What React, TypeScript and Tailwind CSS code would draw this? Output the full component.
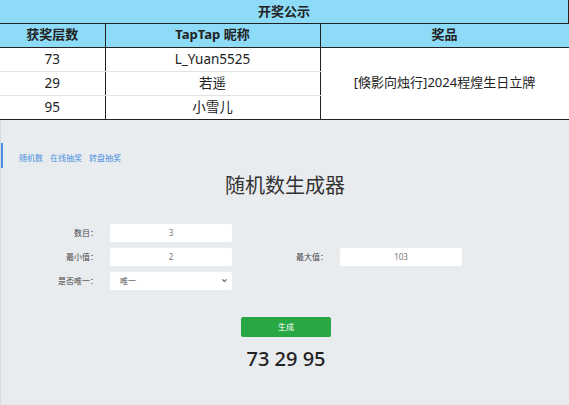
import React from "react";

const winners = [
  { floor: "73", name: "L_Yuan5525" },
  { floor: "29", name: "若遥" },
  { floor: "95", name: "小雪儿" },
];

const font = { fontFamily: '"Noto Sans", "Noto Sans CJK SC", sans-serif' };

function Field({ value }: { value: string }) {
  return (
    <div className="h-[18px] w-[122px] rounded-[2px] bg-white flex items-center justify-center text-[8px] text-[#777]">
      {value}
    </div>
  );
}

function Label({ text }: { text: string }) {
  return <div className="text-right text-[8px] text-[#4a4a4a] leading-[18px]">{text}</div>;
}

export default function App() {
  return (
    <div className="w-[569px] h-[405px] bg-white overflow-hidden" style={font}>
      <table className="w-[569px] border-collapse text-[13.5px] text-[#222] table-fixed">
        <colgroup>
          <col className="w-[105px]" />
          <col className="w-[215px]" />
          <col />
        </colgroup>
        <thead>
          <tr className="h-[23px] bg-[#8ddbf7]">
            <th colSpan={3} className="border-r border-b border-[#222] font-bold text-[13px] p-0">
              开奖公示
            </th>
          </tr>
          <tr className="h-[24px] bg-[#8ddbf7]">
            <th className="border-b border-r border-[#222] font-bold text-[13px] p-0">获奖层数</th>
            <th className="border-b border-r border-[#222] font-bold text-[13px] p-0">TapTap 昵称</th>
            <th className="border-b border-[#222] font-bold text-[13px] p-0">奖品</th>
          </tr>
        </thead>
        <tbody>
          {winners.map((w, i) => (
            <tr key={w.floor} className="h-[24px]">
              <td
                className={`text-center p-0 border-r border-[#222] ${
                  i < 2 ? "border-b border-b-[#e2e2e2]" : "border-b border-b-[#222]"
                }`}
              >
                {w.floor}
              </td>
              <td
                className={`text-center p-0 border-r border-[#222] ${
                  i < 2 ? "border-b border-b-[#e2e2e2]" : "border-b border-b-[#222]"
                }`}
              >
                {w.name}
              </td>
              {i === 0 && (
                <td rowSpan={3} className="text-center p-0 border-b border-[#222] text-[13px]">
                  [倏影向烛行]2024程煌生日立牌
                </td>
              )}
            </tr>
          ))}
        </tbody>
      </table>

      <div className="h-[286px] bg-[#e9ecef] border-l border-[#d6dadf] flex flex-col">
        <nav className="mt-[23px] h-[25px] border-l-2 border-[#4a8fe0] pl-[16px] pt-[9px] flex gap-[7px] text-[8px] leading-[11px] text-[#4a8fe0]">
          <span>随机数</span>
          <span>在线抽奖</span>
          <span>转盘抽奖</span>
        </nav>

        <h1 className="mt-[4px] h-[28px] text-center text-[20px] leading-[28px] text-[#333]">随机数生成器</h1>

        <div className="mt-[24px] grid grid-cols-[97px_122px_84px_122px] gap-x-[12px] gap-y-[6px]">
          <Label text="数目：" />
          <Field value="3" />
          <div />
          <div />

          <Label text="最小值：" />
          <Field value="2" />
          <Label text="最大值：" />
          <Field value="103" />

          <Label text="是否唯一：" />
          <div className="h-[18px] w-[122px] rounded-[2px] bg-white flex items-center justify-between pl-[10px] pr-[4px] text-[8px] text-[#555]">
            <span>唯一</span>
            <svg width="7" height="7" viewBox="0 0 10 10" fill="none" stroke="#555" strokeWidth="1.6">
              <path d="M2 3.5 L5 6.5 L8 3.5" />
            </svg>
          </div>
          <div />
          <div />
        </div>

        <div className="mt-[27px] flex justify-center pl-[2px]">
          <button className="w-[90px] h-[20px] rounded-[2px] bg-[#28a745] text-white text-[8px] flex items-center justify-center">
            生成
          </button>
        </div>

        <div className="mt-[8px] text-center pl-[2px] text-[20px] leading-[28px] font-medium text-[#222]">73 29 95</div>
      </div>
    </div>
  );
}
